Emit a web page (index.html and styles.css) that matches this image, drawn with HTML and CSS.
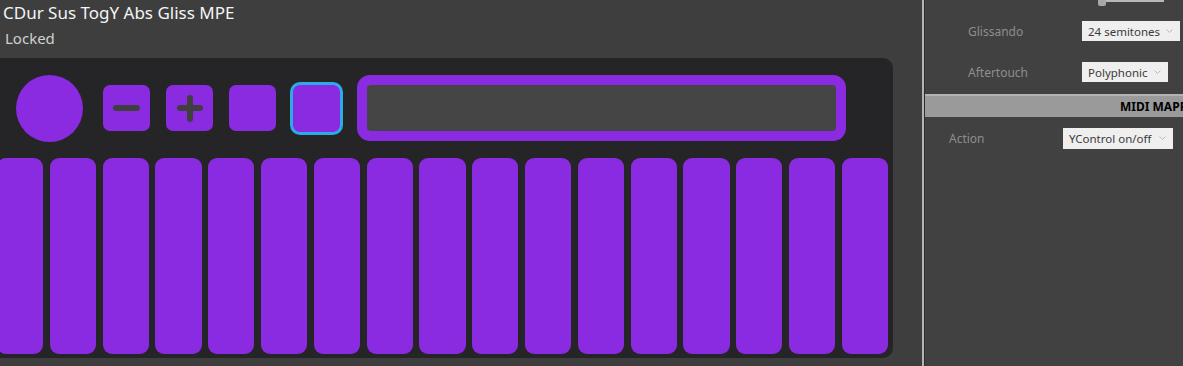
FILE: index.html
```html
<!DOCTYPE html>
<html>
<head>
<meta charset="utf-8">
<link rel="stylesheet" href="styles.css">
</head>
<body>
<div class="app">
  <main class="main">
    <div class="title">CDur Sus TogY Abs Gliss MPE</div>
    <div class="status">Locked</div>
    <div class="panel">
      <div class="toprow">
        <div class="circle"></div>
        <div class="btn minus"><span class="hbar"></span></div>
        <div class="btn plus"><span class="hbar"></span><span class="vbar"></span></div>
        <div class="btn"></div>
        <div class="btn sel"></div>
        <div class="display"><div class="screen"></div></div>
      </div>
      <div class="pads">
        <div class="pad"></div><div class="pad"></div><div class="pad"></div><div class="pad"></div>
        <div class="pad"></div><div class="pad"></div><div class="pad"></div><div class="pad"></div>
        <div class="pad"></div><div class="pad"></div><div class="pad"></div><div class="pad"></div>
        <div class="pad"></div><div class="pad"></div><div class="pad"></div><div class="pad"></div>
        <div class="pad"></div>
      </div>
    </div>
  </main>
  <div class="divider"></div>
  <aside class="side">
    <div class="sliderrow"><span class="thumb"></span><span class="track"></span></div>
    <div class="row r1"><span class="label">Glissando</span><span class="select w98">24 semitones<svg class="chev" width="7" height="4" viewBox="0 0 7 4"><path d="M0.5 0.5 L3.5 3.5 L6.5 0.5" fill="none" stroke="#b8b8b8" stroke-width="1"/></svg></span></div>
    <div class="row r2"><span class="label">Aftertouch</span><span class="select w86">Polyphonic<svg class="chev" width="7" height="4" viewBox="0 0 7 4"><path d="M0.5 0.5 L3.5 3.5 L6.5 0.5" fill="none" stroke="#b8b8b8" stroke-width="1"/></svg></span></div>
    <div class="header"><span class="htext">MIDI MAPPING</span></div>
    <div class="row r3"><span class="label l2">Action</span><span class="select w110">YControl on/off<svg class="chev" width="7" height="4" viewBox="0 0 7 4"><path d="M0.5 0.5 L3.5 3.5 L6.5 0.5" fill="none" stroke="#b8b8b8" stroke-width="1"/></svg></span></div>
  </aside>
</div>
</body>
</html>
```

FILE: styles.css
```css
html, body {
  margin: 0;
  padding: 0;
  background: #3e3e3f;
  overflow: hidden;
}
.app {
  display: flex;
  width: 1183px;
  height: 366px;
  font-family: "Noto Sans", "Open Sans", sans-serif;
}
.main {
  width: 922px;
  flex: none;
  background: #3e3e3f;
  overflow: hidden;
}
.title {
  color: #f4f4f4;
  font-size: 17px;
  line-height: 22px;
  padding: 2px 0 0 3px;
  height: 22px;
}
.status {
  color: #d0d0d0;
  font-size: 15px;
  line-height: 20px;
  padding-left: 5px;
  margin-top: 4px;
  height: 20px;
}
.panel {
  margin-top: 10px;
  margin-left: -8px;
  width: 901px;
  height: 300px;
  box-sizing: border-box;
  background: #252527;
  border-radius: 10px;
  padding: 17px 5px 4px 5px;
  display: flex;
  flex-direction: column;
}
.toprow {
  display: flex;
  align-items: center;
  height: 66px;
  padding-left: 19px;
}
.circle {
  width: 67px;
  height: 67px;
  border-radius: 50%;
  background: #8a2be2;
  flex: none;
}
.btn {
  width: 47px;
  height: 46px;
  border-radius: 7px;
  background: #8a2be2;
  flex: none;
  margin-left: 16px;
  position: relative;
  display: flex;
  align-items: center;
  justify-content: center;
}
.btn.minus { margin-left: 20px; }
.btn.sel {
  width: 53px;
  height: 53px;
  box-sizing: border-box;
  border: 3px solid #2aade6;
  border-radius: 10px;
  margin-left: 14px;
}
.hbar {
  display: block;
  width: 27px;
  height: 6px;
  border-radius: 3px;
  background: #3f3f40;
}
.plus .hbar { width: 26px; }
.vbar {
  position: absolute;
  left: 50%;
  top: 50%;
  width: 6px;
  height: 27px;
  margin-left: -3px;
  margin-top: -13.5px;
  border-radius: 3px;
  background: #3f3f40;
}
.display {
  margin-left: 14px;
  width: 489px;
  height: 66px;
  box-sizing: border-box;
  border: 10px solid #8a2be2;
  border-radius: 13px;
  background: #8a2be2;
  flex: none;
}
.screen {
  width: 100%;
  height: 100%;
  background: #454545;
  border-radius: 4px;
}
.pads {
  margin-top: 17px;
  flex: 1;
  display: flex;
  gap: 6.6px;
}
.pad {
  flex: 1;
  background: #8a2be2;
  border-radius: 9px;
}
.divider {
  width: 2px;
  flex: none;
  background: #b4b4b4;
  border-right: 1px solid #2e2e2e;
}
.side {
  flex: 1;
  background: #414141;
  overflow: hidden;
  white-space: nowrap;
  font-size: 11.5px;
}
.sliderrow {
  height: 6px;
  display: flex;
  align-items: flex-start;
  padding-left: 173px;
}
.thumb {
  width: 8px;
  height: 6px;
  background: #a8a8a8;
  border-radius: 0 0 2px 2px;
}
.track {
  width: 58px;
  height: 2px;
  background: #b8b8b8;
}
.row {
  display: flex;
  align-items: center;
}
.r1 { margin-top: 15px; height: 20px; }
.r2 { margin-top: 21px; height: 20px; }
.r3 { margin-top: 11px; height: 21px; }
.label {
  color: #8e8e8e;
  width: 114px;
  padding-left: 43px;
  flex: none;
  font-size: 12px;
}
.label.l2 {
  padding-left: 24px;
}
.select {
  height: 100%;
  box-sizing: border-box;
  background: #efefef;
  color: #3a3a3a;
  padding-left: 6px;
  display: flex;
  align-items: center;
  position: relative;
}
.w98 { width: 98px; }
.w86 { width: 86px; }
.w110 { width: 110px; }
.chev {
  position: absolute;
  right: 7px;
  top: 8px;
}
.header {
  margin-top: 12px;
  height: 23px;
  box-sizing: border-box;
  background: #9a9a9a;
  border-top: 2px solid #b3b3b3;
  color: #000;
  font-weight: bold;
  font-size: 12px;
  line-height: 21px;
  padding-left: 195px;
  overflow: hidden;
}
```
